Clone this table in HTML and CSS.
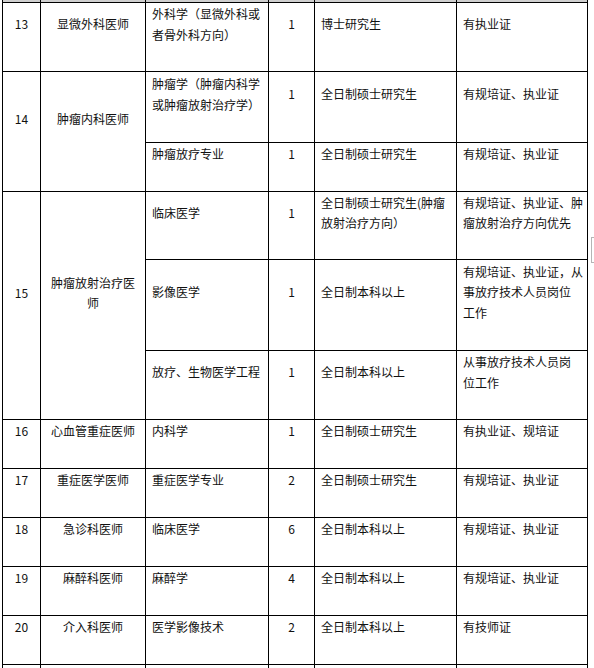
FILE: index.html
```html
<!DOCTYPE html>
<html lang="zh">
<head>
<meta charset="utf-8">
<title>岗位表</title>
<link rel="stylesheet" href="styles.css">
</head>
<body>
<div class="page">
  <table class="grid">
    <colgroup>
      <col class="c-num"><col class="c-post"><col class="c-major"><col class="c-count"><col class="c-edu"><col class="c-req">
    </colgroup>
    <tr class="stub"><td></td><td></td><td></td><td></td><td></td><td></td></tr>
    <tr class="h69">
      <td class="num">13</td>
      <td class="post">显微外科医师</td>
      <td class="txt">外科学（显微外科或<br>者骨外科方向）</td>
      <td class="count">1</td>
      <td class="txt">博士研究生</td>
      <td class="txt">有执业证</td>
    </tr>
    <tr class="h71">
      <td class="num" rowspan="2">14</td>
      <td class="post" rowspan="2">肿瘤内科医师</td>
      <td class="txt">肿瘤学（肿瘤内科学<br>或肿瘤放射治疗学）</td>
      <td class="count">1</td>
      <td class="txt">全日制硕士研究生</td>
      <td class="txt">有规培证、执业证</td>
    </tr>
    <tr class="h49">
      <td class="txt">肿瘤放疗专业</td>
      <td class="count">1</td>
      <td class="txt">全日制硕士研究生</td>
      <td class="txt">有规培证、执业证</td>
    </tr>
    <tr class="h68">
      <td class="num" rowspan="3">15</td>
      <td class="post" rowspan="3">肿瘤放射治疗医<br>师</td>
      <td class="txt">临床医学</td>
      <td class="count">1</td>
      <td class="txt">全日制硕士研究生(肿瘤<br>放射治疗方向）</td>
      <td class="txt">有规培证、执业证、肿<br>瘤放射治疗方向优先</td>
    </tr>
    <tr class="h91">
      <td class="txt">影像医学</td>
      <td class="count">1</td>
      <td class="txt">全日制本科以上</td>
      <td class="txt">有规培证、执业证，从<br>事放疗技术人员岗位<br>工作</td>
    </tr>
    <tr class="h69">
      <td class="txt">放疗、生物医学工程</td>
      <td class="count">1</td>
      <td class="txt">全日制本科以上</td>
      <td class="txt">从事放疗技术人员岗<br>位工作</td>
    </tr>
    <tr class="h49">
      <td class="num">16</td>
      <td class="post">心血管重症医师</td>
      <td class="txt">内科学</td>
      <td class="count">1</td>
      <td class="txt">全日制硕士研究生</td>
      <td class="txt">有执业证、规培证</td>
    </tr>
    <tr class="h49">
      <td class="num">17</td>
      <td class="post">重症医学医师</td>
      <td class="txt">重症医学专业</td>
      <td class="count">2</td>
      <td class="txt">全日制硕士研究生</td>
      <td class="txt">有规培证、执业证</td>
    </tr>
    <tr class="h49">
      <td class="num">18</td>
      <td class="post">急诊科医师</td>
      <td class="txt">临床医学</td>
      <td class="count">6</td>
      <td class="txt">全日制本科以上</td>
      <td class="txt">有规培证、执业证</td>
    </tr>
    <tr class="h49">
      <td class="num">19</td>
      <td class="post">麻醉科医师</td>
      <td class="txt">麻醉学</td>
      <td class="count">4</td>
      <td class="txt">全日制本科以上</td>
      <td class="txt">有规培证、执业证</td>
    </tr>
    <tr class="h49">
      <td class="num">20</td>
      <td class="post">介入科医师</td>
      <td class="txt">医学影像技术</td>
      <td class="count">2</td>
      <td class="txt">全日制本科以上</td>
      <td class="txt">有技师证</td>
    </tr>
    <tr class="cut"><td></td><td></td><td></td><td></td><td></td><td></td></tr>
  </table>
  <div class="scroll-mark"></div>
</div>
</body>
</html>
```

FILE: styles.css
```css
html, body {
  margin: 0;
  padding: 0;
  background: #fff;
  height: 668px;
  overflow: hidden;
}

.page {
  position: relative;
  padding-left: 2px;
  font-family: "Noto Sans CJK SC", "Noto Sans", sans-serif;
  font-size: 12px;
  color: #111;
}

.grid {
  border-collapse: collapse;
  table-layout: fixed;
  width: 585px;
}

.c-num { width: 38px; }
.c-post { width: 105px; }
.c-major { width: 123px; }
.c-count { width: 46px; }
.c-edu { width: 142px; }
.c-req { width: 131px; }

.grid td {
  border: 1px solid #000;
  padding: 0 4px 25px 6px;
  vertical-align: middle;
  line-height: 20.5px;
  white-space: nowrap;
}

.grid tr.stub td {
  height: 2px;
  padding: 0;
  border-top: 0;
  background: #cfcfcf;
  line-height: 0;
}

.grid tr.cut td {
  height: 3px;
  padding: 0;
  border-bottom: 0;
  line-height: 0;
}

.h49 { height: 49px; }
.h68 { height: 68px; }
.h69 { height: 69px; }
.h71 { height: 71px; }
.h91 { height: 91px; }

.grid td.num,
.grid td.post,
.grid td.count {
  text-align: center;
  padding-left: 2px;
  padding-right: 2px;
}

.grid td.txt {
  text-align: left;
}

.scroll-mark {
  position: absolute;
  left: 591px;
  top: 237px;
  width: 3px;
  height: 24px;
  border-left: 1px solid #b5b5b5;
  border-top: 1px solid #b5b5b5;
  border-bottom: 1px solid #b5b5b5;
}
```
